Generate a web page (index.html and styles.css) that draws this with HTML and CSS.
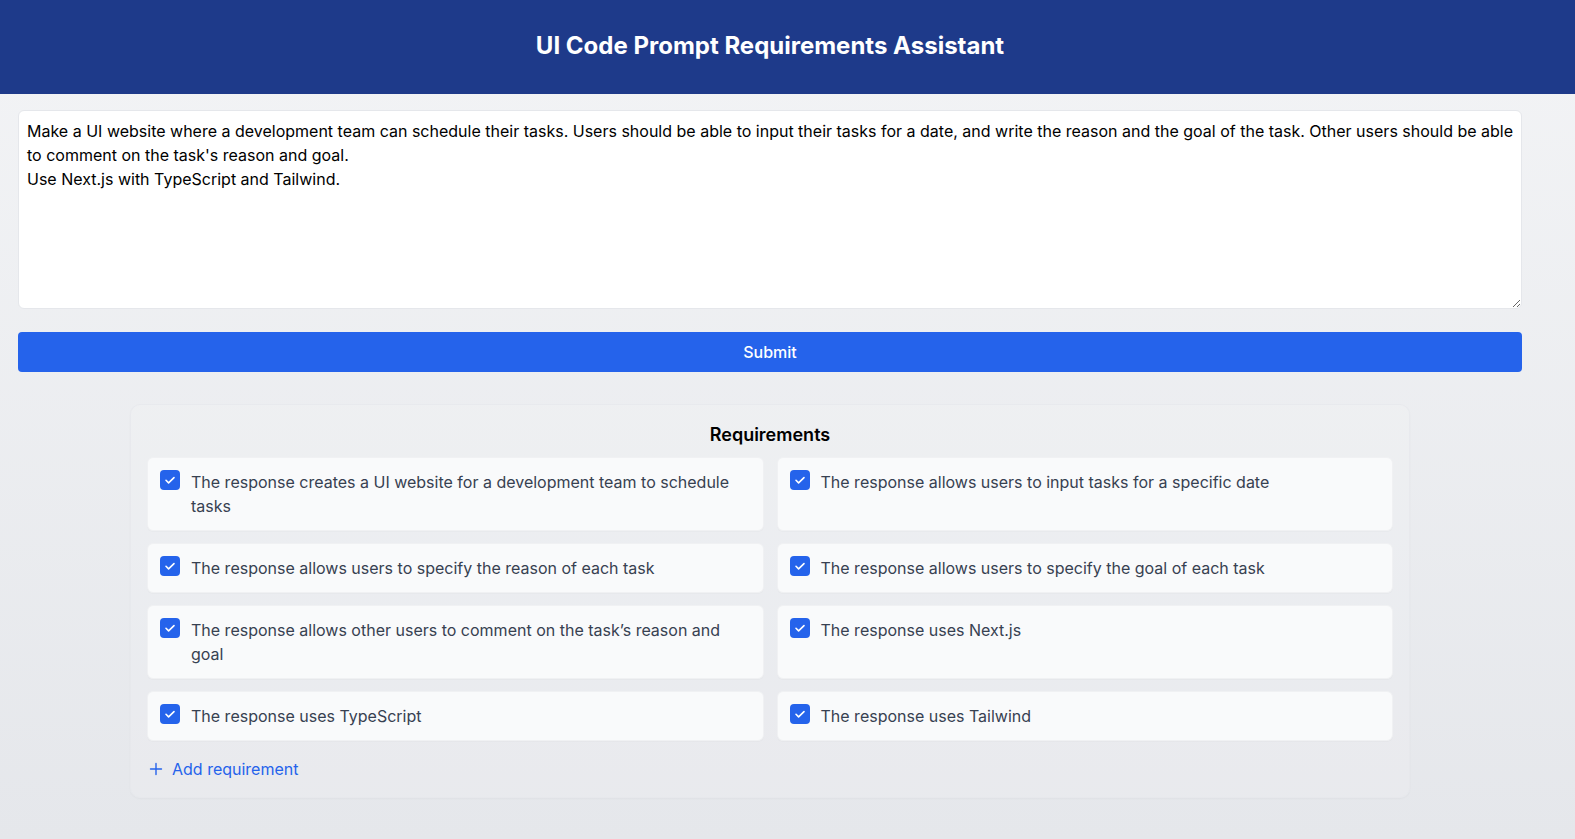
FILE: index.html
```html
<!DOCTYPE html>
<html lang="en">
<head>
<meta charset="utf-8">
<title>UI Code Prompt Requirements Assistant</title>
<link rel="stylesheet" href="styles.css">
</head>
<body>
<header class="topbar">
  <h1 class="title">UI Code Prompt Requirements Assistant</h1>
</header>
<main class="main">
  <textarea class="prompt">Make a UI website where a development team can schedule their tasks. Users should be able to input their tasks for a date, and write the reason and the goal of the task. Other users should be able to comment on the task's reason and goal.
Use Next.js with TypeScript and Tailwind.</textarea>
  <button class="submit">Submit</button>
  <section class="panel">
    <h2 class="panel-title">Requirements</h2>
    <div class="grid">
      <label class="req"><span class="box"><svg viewBox="0 0 20 20" width="20" height="20"><path d="M6 10.3l2.6 2.6L14 7.6" fill="none" stroke="#fff" stroke-width="1.6" stroke-linecap="round" stroke-linejoin="round"/></svg></span><span class="req-text">The response creates a UI website for a development team to schedule tasks</span></label>
      <label class="req"><span class="box"><svg viewBox="0 0 20 20" width="20" height="20"><path d="M6 10.3l2.6 2.6L14 7.6" fill="none" stroke="#fff" stroke-width="1.6" stroke-linecap="round" stroke-linejoin="round"/></svg></span><span class="req-text">The response allows users to input tasks for a specific date</span></label>
      <label class="req"><span class="box"><svg viewBox="0 0 20 20" width="20" height="20"><path d="M6 10.3l2.6 2.6L14 7.6" fill="none" stroke="#fff" stroke-width="1.6" stroke-linecap="round" stroke-linejoin="round"/></svg></span><span class="req-text">The response allows users to specify the reason of each task</span></label>
      <label class="req"><span class="box"><svg viewBox="0 0 20 20" width="20" height="20"><path d="M6 10.3l2.6 2.6L14 7.6" fill="none" stroke="#fff" stroke-width="1.6" stroke-linecap="round" stroke-linejoin="round"/></svg></span><span class="req-text">The response allows users to specify the goal of each task</span></label>
      <label class="req"><span class="box"><svg viewBox="0 0 20 20" width="20" height="20"><path d="M6 10.3l2.6 2.6L14 7.6" fill="none" stroke="#fff" stroke-width="1.6" stroke-linecap="round" stroke-linejoin="round"/></svg></span><span class="req-text">The response allows other users to comment on the task’s reason and goal</span></label>
      <label class="req"><span class="box"><svg viewBox="0 0 20 20" width="20" height="20"><path d="M6 10.3l2.6 2.6L14 7.6" fill="none" stroke="#fff" stroke-width="1.6" stroke-linecap="round" stroke-linejoin="round"/></svg></span><span class="req-text">The response uses Next.js</span></label>
      <label class="req"><span class="box"><svg viewBox="0 0 20 20" width="20" height="20"><path d="M6 10.3l2.6 2.6L14 7.6" fill="none" stroke="#fff" stroke-width="1.6" stroke-linecap="round" stroke-linejoin="round"/></svg></span><span class="req-text">The response uses TypeScript</span></label>
      <label class="req"><span class="box"><svg viewBox="0 0 20 20" width="20" height="20"><path d="M6 10.3l2.6 2.6L14 7.6" fill="none" stroke="#fff" stroke-width="1.6" stroke-linecap="round" stroke-linejoin="round"/></svg></span><span class="req-text">The response uses Tailwind</span></label>
    </div>
    <button class="add"><svg viewBox="0 0 16 16" width="16" height="16"><path d="M8 2.5v11M2.5 8h11" fill="none" stroke="#2563eb" stroke-width="1.4" stroke-linecap="round"/></svg><span>Add requirement</span></button>
  </section>
</main>
</body>
</html>
```
FILE: styles.css
```css
* { box-sizing: border-box; }
html, body { margin: 0; padding: 0; }
body {
  font-family: Inter, "Noto Sans", "Liberation Sans", sans-serif;
  background: linear-gradient(to bottom, #f3f4f6, #e5e7eb);
  min-height: 839px;
  color: #111827;
}
.topbar {
  background: #1e3a8a;
  height: 94px;
  display: flex;
  align-items: center;
  justify-content: center;
  padding: 0 53px 2px 18px;
}
.title {
  margin: 0;
  color: #fff;
  font-size: 24px;
  font-weight: 700;
  line-height: 32px;
}
.main {
  padding: 16px 53px 40px 18px;
  display: flex;
  flex-direction: column;
}
.prompt {
  display: block;
  width: 100%;
  height: 199px;
  padding: 8px 3px 8px 8px;
  border: 1px solid #e5e7eb;
  border-radius: 6px;
  background: #fff;
  font-family: Inter, "Noto Sans", "Liberation Sans", sans-serif;
  font-size: 16px;
  line-height: 24px;
  color: #000;
  resize: vertical;
  margin: 0 0 23px 0;
  outline: none;
}
.submit {
  height: 40px;
  width: 100%;
  border: none;
  border-radius: 4px;
  background: #2563eb;
  color: #fff;
  font-family: Inter, "Noto Sans", "Liberation Sans", sans-serif;
  font-size: 16px;
  font-weight: 500;
  cursor: pointer;
}
.panel {
  width: 1280px;
  margin: 32px auto 0;
  border: 1px solid rgba(229, 231, 235, 0.7);
  border-radius: 10px;
  padding: 16px;
  background: rgba(255, 255, 255, 0.12);
  box-shadow: 0 1px 2px rgba(0, 0, 0, 0.03);
}
.panel-title {
  margin: 0 0 8px 0;
  text-align: center;
  font-size: 18px;
  line-height: 28px;
  font-weight: 600;
  color: #000;
}
.grid {
  display: grid;
  grid-template-columns: 1fr 1fr;
  column-gap: 13px;
  row-gap: 12px;
}
.req {
  display: flex;
  align-items: flex-start;
  gap: 11px;
  padding: 12px;
  background: #f9fafb;
  border: 1px solid #f0f1f3;
  border-radius: 6px;
  box-shadow: 0 1px 1px rgba(0, 0, 0, 0.02);
}
.box {
  flex: none;
  width: 20px;
  height: 20px;
  border-radius: 4px;
  background: #2563eb;
  display: flex;
}
.req-text {
  font-size: 16px;
  line-height: 24px;
  color: #374151;
}
.add {
  margin-top: 16px;
  display: flex;
  align-items: center;
  gap: 8px;
  padding: 0 0 0 1px;
  border: none;
  background: none;
  color: #2563eb;
  font-family: Inter, "Noto Sans", "Liberation Sans", sans-serif;
  font-size: 16px;
  line-height: 24px;
  cursor: pointer;
}
```
